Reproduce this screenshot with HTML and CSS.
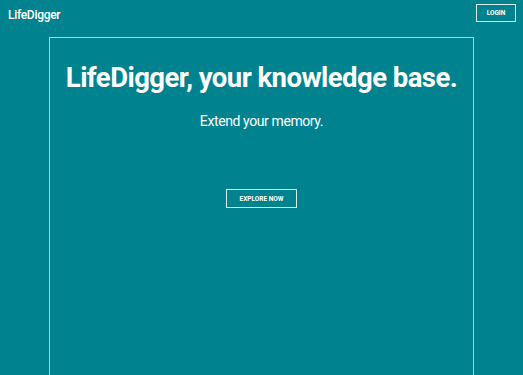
FILE: index.html
```html
<!DOCTYPE html>
<html>
<head>
<meta charset="utf-8">
<link rel="stylesheet" href="styles.css">
</head>
<body>
<header class="topbar">
  <div class="brand">LifeDigger</div>
  <button class="login">LOGIN</button>
</header>
<main class="hero">
  <h1 class="title">LifeDigger, your knowledge base.</h1>
  <p class="subtitle">Extend your memory.</p>
  <button class="explore">EXPLORE NOW</button>
</main>
</body>
</html>
```
FILE: styles.css
```css
html, body {
  margin: 0;
  padding: 0;
  height: 100%;
}
body {
  background: #00838f;
  color: #fff;
  font-family: Roboto, "Liberation Sans", sans-serif;
  overflow: hidden;
}
.topbar {
  display: flex;
  justify-content: space-between;
  align-items: center;
  height: 25px;
  padding: 2px 7px 0 8px;
}
.brand {
  font-size: 12px;
  font-weight: 500;
  letter-spacing: -0.3px;
}
.login {
  background: transparent;
  color: #fff;
  border: 1px solid rgba(255,255,255,0.85);
  font-family: Roboto, "Liberation Sans", sans-serif;
  font-size: 6.5px;
  font-weight: 700;
  height: 18px;
  width: 40px;
  padding: 0;
  margin-top: -3px;
}
.hero {
  width: 423px;
  margin: 10px auto 0;
  border: 1px solid rgba(255,255,255,0.65);
  border-bottom: none;
  height: 340px;
  display: flex;
  flex-direction: column;
  align-items: center;
}
.title {
  margin: 24px 0 0;
  font-size: 27.5px;
  font-weight: 700;
  letter-spacing: -0.55px;
  white-space: nowrap;
  line-height: 32px;
}
.subtitle {
  margin: 18px 0 0;
  font-size: 14px;
  font-weight: 400;
  letter-spacing: -0.4px;
  line-height: 18px;
}
.explore {
  margin-top: 59px;
  background: transparent;
  color: #fff;
  border: 1px solid rgba(255,255,255,0.85);
  font-family: Roboto, "Liberation Sans", sans-serif;
  font-size: 6.5px;
  font-weight: 700;
  width: 71px;
  height: 19px;
  padding: 0;
}
```
